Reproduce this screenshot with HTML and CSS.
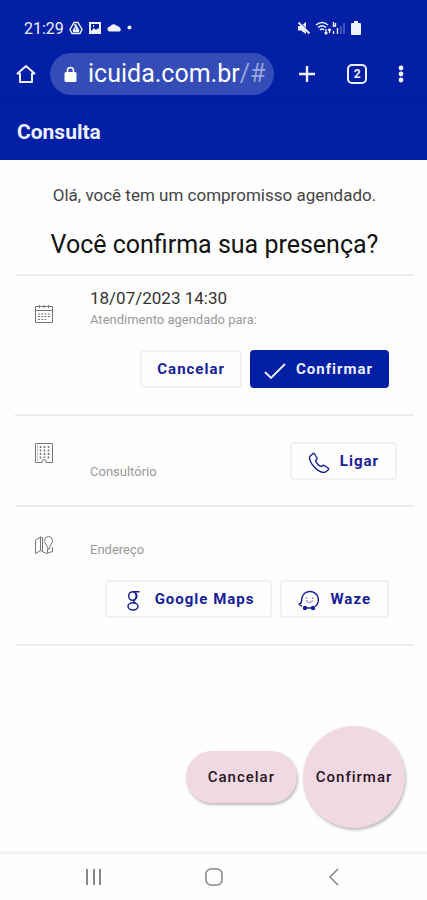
FILE: index.html
```html
<!DOCTYPE html>
<html lang="pt-BR">
<head>
<meta charset="utf-8">
<meta name="viewport" content="width=device-width, initial-scale=1">
<title>Consulta</title>
<link rel="stylesheet" href="styles.css">
</head>
<body>
<header class="top">
  <div class="status">
    <div class="status-group">
      <span class="clock">21:29</span>
      <svg width="14" height="14" viewBox="0 0 14 14" fill="none" stroke="currentColor" stroke-width="1.400"><path d="M5 1.500h4l4 7-2 4H3l-2-4z"/><path d="M7 4.500 4.500 9h5zM5.500 3 8 8M4 10.500h6"/></svg>
      <svg width="14" height="14" viewBox="0 0 14 14"><path fill="currentColor" fill-rule="evenodd" d="M1 1h12v12H1zM3 3v7l3-3 2 2 2-2 1 1V3zM5 4h1v2H5z"/></svg>
      <svg width="15" height="14" viewBox="0 0 15 14"><path fill="currentColor" d="M3 10.500a2.500 2.500 0 0 1 0-5 4 4 0 0 1 7-.5 3 3 0 0 1 3 2 2 2 0 0 1-.5 3.500z"/></svg>
      <svg width="5" height="14" viewBox="0 0 5 14"><circle cx="2.500" cy="6.500" r="2" fill="currentColor"/></svg>
    </div>
    <div class="status-group status-right">
      <svg width="14" height="14" viewBox="0 0 14 14"><path fill="currentColor" d="M1 5h3l5-4v12L4 9.500H1z"/><path d="m2 .5 11 12" stroke="#001fa5" stroke-width="1.500"/><path d="m1.500 1.500 11 11" stroke="currentColor" stroke-width="1.800"/></svg>
      <svg width="32" height="14" viewBox="0 0 32 14" fill="none" stroke="currentColor"><path d="M1 4q6-5 12 0M3 6.500q4-3.500 8 0M5 9q2-2 4 0" stroke-width="1.600"/><path d="M11 8v5M9.500 11.500 11 13l1.500-1.500M14.500 12V8M13 9.500 14.500 8 16 9.500M18.500 1v5M20.500 2v3h-2M18.500 10v3M22.500 7v6" stroke-width="1.400"/><path d="M26 5v8M29 2v11" opacity=".5"/></svg>
      <svg width="10" height="14" viewBox="0 0 10 14"><path fill="currentColor" d="M3 0h4v2h2q1 0 1 1v10q0 1-1 1H1q-1 0-1-1V3q0-1 1-1h2z"/></svg>
    </div>
  </div>
  <div class="browser">
    <button class="icon-button" aria-label="Página inicial"><svg width="20" height="20" viewBox="0 0 20 20" fill="none" stroke="currentColor" stroke-width="2"><path d="M10 2 1.500 9.500H4V18h12V9.500h2.500z" stroke-linejoin="round"/></svg></button>
    <button class="address">
      <svg width="13" height="17" viewBox="0 0 13 17"><rect x=".5" y="6" width="12" height="10" rx="1.500" fill="currentColor"/><path d="M3.500 7V4.500a3 3 0 0 1 6 0V7" fill="none" stroke="currentColor" stroke-width="1.600"/></svg>
      <span>icuida.com.br<span class="path">/#</span></span>
    </button>
    <div class="tools">
      <button class="icon-button" aria-label="Nova guia"><svg width="18" height="18" viewBox="0 0 18 18" stroke="currentColor" stroke-width="2.400"><path d="M9 1v16M1 9h16"/></svg></button>
      <button class="icon-button tabs" aria-label="Guias abertas">2</button>
      <button class="icon-button" aria-label="Mais opções"><svg width="6" height="18" viewBox="0 0 6 18" fill="currentColor"><circle cx="3" cy="3" r="2.400"/><circle cx="3" cy="9" r="2.400"/><circle cx="3" cy="15" r="2.400"/></svg></button>
    </div>
  </div>
  <h1 class="page-title">Consulta</h1>
</header>

<main class="content">
  <p class="greeting">Olá, você tem um compromisso agendado.</p>
  <h2 class="question">Você confirma sua presença?</h2>

  <section class="row">
    <svg class="row-icon" width="20" height="20" viewBox="0 0 20 20" fill="none" stroke="currentColor"><path d="M1.500 2.500h17v16h-17zM1.500 6.500h17M5.500 1v3M10 1v3M14.500 1v3"/><path d="M4 10h12M4 12.500h12M4 15.500h8" stroke-dasharray="2 1.300"/></svg>
    <div class="row-text"><p class="date">18/07/2023 14:30</p><p class="label">Atendimento agendado para:</p></div>
    <div class="actions">
      <button class="button">Cancelar</button>
      <button class="button primary"><svg width="22" height="18" viewBox="0 0 22 18" fill="none" stroke="currentColor" stroke-width="1.800"><path d="m1 10 6 6L21 2"/></svg>Confirmar</button>
    </div>
  </section>

  <section class="row inline">
    <svg class="row-icon" width="20" height="22" viewBox="0 0 20 22" fill="none" stroke="currentColor"><path d="M1.500 1.500h17v19H12v-2l-2-1-2 1v2H1.500z"/><path d="M6.500 4v13M10.500 4v12M14.500 4v13" stroke-width="1.600" stroke-dasharray="2 1.500"/><path d="M3.500 3v16" opacity=".4"/></svg>
    <p class="label">Consultório</p>
    <button class="button with-icon"><svg width="22" height="22" viewBox="0 0 22 22" fill="none" stroke="currentColor" stroke-width="1.400" stroke-linejoin="round"><path d="M5 1.500 1.800 4.500C.5 9 8 20 16 20.500c2 0 3-1.500 4.500-3 .5-1-.5-1.500-1-2L16 13.300c-1-.5-1.500.2-2.500 1.200-2.500-.5-5-3.500-6-6C8.500 7.500 9.500 7 9 6L6.500 2Q5.800 1 5 1.500z"/></svg>Ligar</button>
  </section>

  <section class="row address-row">
    <svg class="row-icon" width="20" height="20" viewBox="0 0 20 20" fill="none" stroke="currentColor"><path d="M9 3 6.500 2 1.500 5v13.500l5-3 6 3 6-2V12M6.500 2v13.500M8.500 3v13"/><path d="M14.500 14.500c-1-3.500-4-6-4-9a4 4 0 0 1 8 0c0 3-3 5.500-4 9zM13.500 14v4"/></svg>
    <p class="label">Endereço</p>
    <div class="actions">
      <button class="button with-icon"><svg width="22" height="22" viewBox="0 0 22 22" fill="none" stroke="currentColor" stroke-width="1.500"><ellipse cx="9.500" cy="6" rx="3.800" ry="4.300"/><path d="M16.500 1.700H9.500M12.500 3c2 2.500 1.500 5-1 7.300-1.500 1.300-1 2 1 3.200"/><ellipse cx="10" cy="16.300" rx="5" ry="3.600"/></svg>Google Maps</button>
      <button class="button with-icon"><svg width="22" height="22" viewBox="0 0 22 22" fill="none" stroke="currentColor" stroke-width="1.400"><path d="M4 16c-1.500-.4-2-1-2.800-1.800C3.500 13.500 3.600 12 3.800 9A8.300 8.300 0 1 1 17 16.500M9 18h4"/><circle cx="7" cy="18" r="1.500" fill="currentColor"/><circle cx="15" cy="18" r="1.500" fill="currentColor"/><path d="M8.500 9v-2M14.500 9v-2M8.500 10c.5 3.500 5.500 3.500 6 0" opacity=".4"/></svg>Waze</button>
    </div>
  </section>
</main>

<div class="floating">
  <button class="fab">Cancelar</button>
  <button class="fab round">Confirmar</button>
</div>

<nav class="system" aria-label="Sistema">
  <button class="icon-button" aria-label="Recentes"><svg width="18" height="18" viewBox="0 0 18 18" stroke="currentColor" stroke-width="2"><path d="M3 1v16M10 1v16M16 1v16"/></svg></button>
  <button class="icon-button" aria-label="Início"><svg width="18" height="18" viewBox="0 0 18 18" fill="none" stroke="currentColor" stroke-width="1.600"><rect x="1" y="1" width="16" height="16" rx="5"/></svg></button>
  <button class="icon-button" aria-label="Voltar"><svg width="18" height="18" viewBox="0 0 18 18" fill="none" stroke="currentColor" stroke-width="1.600"><path d="M13 1 5 9l8 8"/></svg></button>
</nav>
</body>
</html>
```
FILE: styles.css
```css
* { box-sizing: border-box; }
body {
  margin: 0;
  min-height: 100vh;
  display: flex;
  flex-direction: column;
  background: #fefefe;
  color: #222;
  font-family: Roboto, "Liberation Sans", sans-serif;
}
h1, h2, p { margin: 0; font-weight: 400; }
button { font: inherit; color: inherit; border: 0; background: none; padding: 0; margin: 0; }
svg { display: block; flex: none; }

.top { background: #001fa5; color: #eef1ff; }
.status { display: flex; justify-content: space-between; padding: 18px 66px 0 24px; height: 49px; }
.status-group { display: flex; align-items: center; gap: 5px; height: 20px; }
.status-right { gap: 4px; }
.clock { font-size: 16px; }
.browser { display: flex; align-items: center; padding: 4px 20px 8px 16px; }
.icon-button { display: grid; place-items: center; }
.address {
  flex: 0 1 224px;
  height: 42px;
  margin-left: 14px;
  padding: 0 9px 0 14px;
  display: flex;
  align-items: center;
  gap: 11px;
  border-radius: 21px;
  background: #334cb7;
  color: #fff;
  font-size: 25px;
  line-height: 42px;
  white-space: nowrap;
}
.path { color: #99a5db; }
.tools { flex: 1; display: flex; justify-content: space-between; align-items: center; padding: 0 3px 0 24px; }
.tabs { width: 20px; height: 20px; border: 2px solid; border-radius: 5px; font-size: 12px; line-height: 16px; font-weight: 700; }
.page-title { border-top: 1px solid #001a96; padding: 14px 17px; font-size: 21px; line-height: 28px; font-weight: 700; }

.content { padding: 25px 13px 0 15px; }
.greeting { text-align: center; font-size: 17px; line-height: 20px; color: #444; }
.question { text-align: center; font-size: 25px; line-height: 32px; padding: 24px 0 13px; color: #111; }
.row {
  display: grid;
  grid-template-columns: 55px 1fr auto;
  column-gap: 20px;
  padding: 12px 25px 26px 0;
  border-top: 2px solid #ececec;
}
.row-icon { justify-self: center; margin-left: 3px; color: #777; }
.row:first-of-type .row-icon { margin-top: 16px; }
.row-text { grid-column: 2 / 4; }
.date { font-size: 17px; line-height: 20px; color: #333; }
.label { font-size: 13px; line-height: 16px; color: #999; }
.date + .label { margin-top: 4px; }
.actions { grid-column: 1 / 4; display: flex; justify-content: flex-end; gap: 8px; margin-top: 22px; }
.inline { padding: 26px 17px 25px 0; }
.inline .label { align-self: end; }
.address-row { padding-top: 28px; border-bottom: 2px solid #ececec; }
.address-row .label { margin-top: 7px; }
.button {
  display: flex;
  align-items: center;
  gap: 10px;
  height: 38px;
  padding: 0 15px;
  border: 2px solid #f1f1f1;
  border-radius: 4px;
  color: #172097;
  font-size: 15px;
  line-height: 34px;
  font-weight: 700;
  letter-spacing: 1px;
}
.button svg { margin-top: 4px; }
.with-icon { padding: 0 16px; }
.primary { background: #001fa5; border-color: #001fa5; color: #eef1ff; padding: 0 14px 0 12px; }

.floating { margin-top: auto; display: flex; justify-content: flex-end; align-items: center; gap: 6px; padding: 24px 22px 23px; }
.fab {
  height: 52px;
  padding: 0 22px;
  border-radius: 26px;
  background: #f1d9e4;
  box-shadow: 1px 2px 3px #0004;
  color: #27151f;
  font-size: 15px;
  font-weight: 500;
  letter-spacing: 1px;
}
.round { width: 102px; height: 102px; padding: 0; border-radius: 50%; }

.system { display: flex; justify-content: space-between; padding: 14px 84px; border-top: 3px solid #f4f4f4; color: #888; }
```
